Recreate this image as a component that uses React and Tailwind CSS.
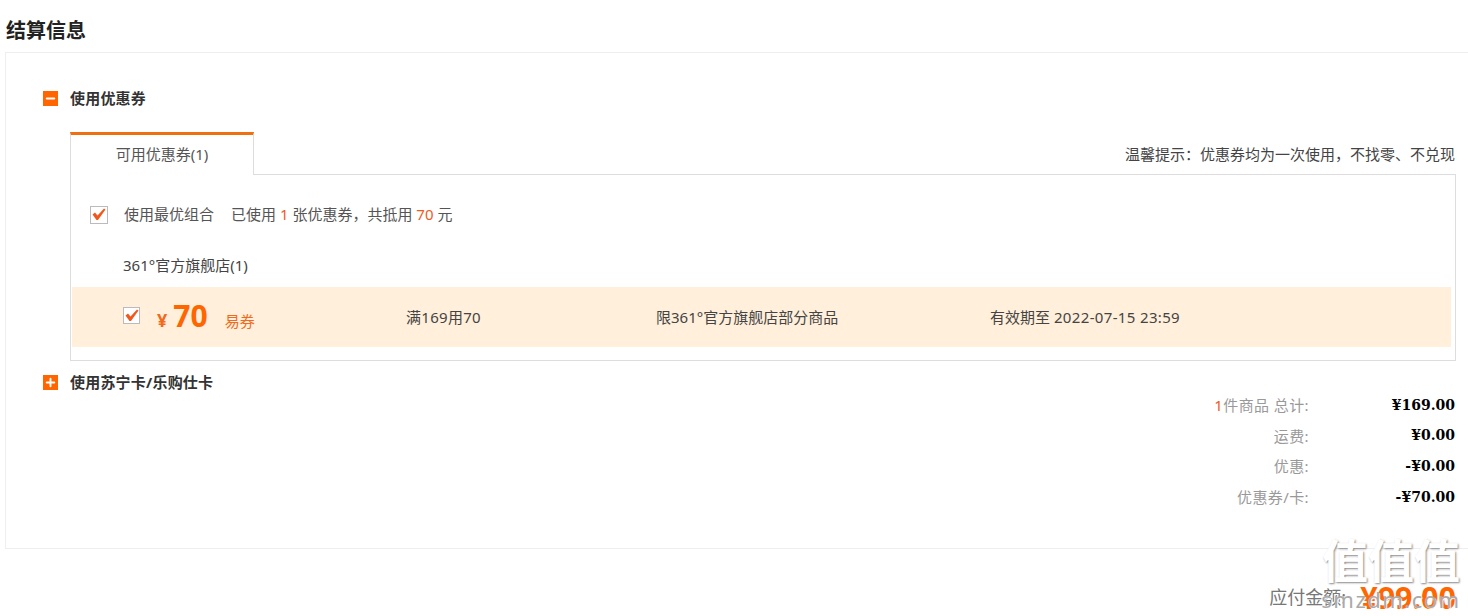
import { Minus, Plus } from 'lucide-react'

const TIP = '温馨提示\uFF1A优惠券均为一次使用\uFF0C不找零、不兑现'

const summaryRows = [
  { label: '运费:', value: '¥0.00' },
  { label: '优惠:', value: '-¥0.00' },
  { label: '优惠券/卡:', value: '-¥70.00' },
]

function SectionHeader({ icon: Icon, title }) {
  return (
    <div className="flex h-[20px] items-center">
      <span className="flex h-[15px] w-[15px] items-center justify-center bg-[#ff6600] text-white">
        <Icon size={13} strokeWidth={3.5} />
      </span>
      <span className="ml-[12px] text-[15px] leading-[18px] font-bold tracking-[0.2px] text-[#333]">{title}</span>
    </div>
  )
}

function CheckBox({ size }) {
  return (
    <span className={`flex items-center justify-center border border-[#bbb] bg-white ${size}`}>
      <svg width="14" height="13" viewBox="0 0 14 13">
        <path d="M0.5 6.5 L3 4.5 L5.5 7.5 L12 0.5 L13.5 1.5 L6 12 L4.5 12 Z" fill="#f0591e" />
      </svg>
    </span>
  )
}

function SummaryRow({ label, value, count }) {
  return (
    <div className="flex h-[30.6px] items-center justify-end pr-px">
      <span className="text-[15px] tracking-[0.4px] text-[#999]">
        {count && <span className="text-[#f05a22]">{count}</span>}
        {label}
      </span>
      <span className="w-[146px] text-right font-['DejaVu_Serif',serif] text-[14px] font-bold text-black">
        {value}
      </span>
    </div>
  )
}

export default function App() {
  return (
    <div className="relative h-[616px] w-[1468px] overflow-hidden bg-white font-['Noto_Sans','Noto_Sans_CJK_SC',sans-serif] text-[#333]">
      <h1 className="flex h-[52px] items-center pl-[6px] pt-[10px] text-[20px] font-bold text-[#222]">结算信息</h1>

      <div className="ml-[5px] h-[497px] border border-r-0 border-[#eee] pl-[37px] pr-[12px] pt-[35px]">
        <SectionHeader icon={Minus} title="使用优惠券" />

        <div className="ml-[27px] mt-[24px]">
          <div className="relative z-10 flex items-end justify-between">
            <div className="-mb-px flex h-[43px] w-[184px] items-center justify-center border-x border-t-[3px] border-x-[#ddd] border-t-[#f06f10] bg-white pb-[2px] text-[15px] text-[#555]">
              可用优惠券(1)
            </div>
            <span className="pb-[9px] pr-px text-[15px] text-[#444]">{TIP}</span>
          </div>

          <div className="h-[187px] border border-[#ddd] pl-px pr-[4px]">
            <div className="flex h-[81px] items-center pb-[2px] pl-[18px] text-[15px] text-[#555]">
              <CheckBox size="h-[18px] w-[18px]" />
              <span className="ml-[16px]">使用最优组合</span>
              <span className="ml-[17px]">
                已使用 <span className="text-[#f05a22]">1</span> 张优惠券{'\uFF0C'}共抵用{' '}
                <span className="text-[#f05a22]">70</span> 元
              </span>
            </div>
            <div className="flex h-[21px] items-center pb-[2px] pl-[51px] text-[15px] text-[#444]">361°官方旗舰店(1)</div>
            <div className="mt-[10px] flex h-[60px] items-center bg-[#ffefdb] pl-[51px] text-[15px] text-[#444]">
              <div className="-mt-[3px]">
                <CheckBox size="h-[17px] w-[17px]" />
              </div>
              <div className="ml-[17px] flex w-[249px] items-baseline text-[#f06a20]">
                <span className="text-[18px] font-bold">¥</span>
                <span className="ml-[6px] text-[30px] font-bold leading-none text-[#ff6600]">70</span>
                <span className="ml-[17px] text-[15px]">易券</span>
              </div>
              <span className="w-[250px] tracking-[0.3px]">满169用70</span>
              <span className="w-[334px]">限361°官方旗舰店部分商品</span>
              <span>
                有效期至 <span className="tracking-[0.35px]">2022-07-15 23:59</span>
              </span>
            </div>
          </div>
        </div>

        <div className="mt-[11px]">
          <SectionHeader icon={Plus} title="使用苏宁卡/乐购仕卡" />
        </div>

        <div className="-mt-[2px]">
          <SummaryRow count="1" label="件商品 总计:" value="¥169.00" />
          {summaryRows.map((row) => (
            <SummaryRow key={row.label} label={row.label} value={row.value} />
          ))}
        </div>
      </div>

      <div className="flex h-[67px] items-end justify-end pb-[4px] pr-[12px]">
        <span className="pb-[1px] text-[18px] text-[#777]">应付金额:</span>
        <span className="ml-[14px] text-[30.5px] font-bold leading-none text-[#ff6600]">¥99.00</span>
      </div>

      {/* site watermark sits over the bottom right corner */}
      <div className="absolute bottom-0 right-[6px] flex h-[84px] w-[142px] flex-col items-center whitespace-nowrap">
        <span className="text-[46px] font-bold leading-[56px] text-white [text-shadow:1px_1px_2px_#888]">值值值</span>
        <span className="-mt-[1px] text-[22px] leading-[24px] tracking-[1.5px] text-[#aaa] [text-shadow:1px_1px_1px_#fff]">smzdm.com</span>
      </div>
    </div>
  )
}
